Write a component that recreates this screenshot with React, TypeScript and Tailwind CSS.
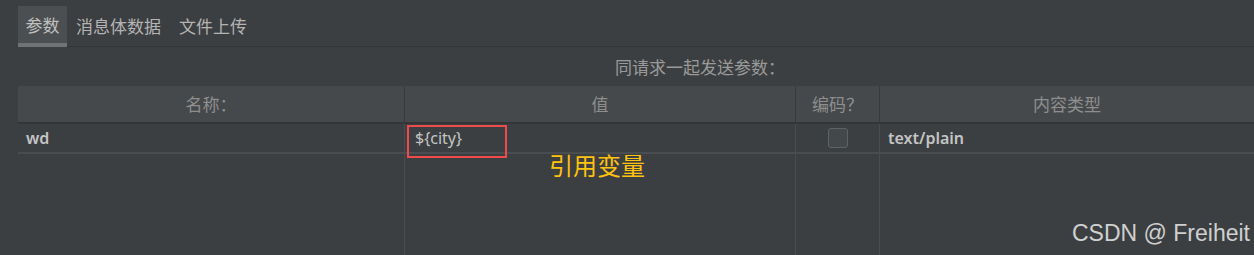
import React from "react";

const cjk = { fontFamily: '"Noto Sans CJK SC", "Noto Sans", sans-serif' };

export default function App() {
  return (
    <div className="w-[1254px] h-[255px] bg-[#3c3f41] overflow-hidden relative" style={cjk}>
      {/* Tabs */}
      <div className="pt-[6px] pl-[18px] flex h-[47px]">
        <div className="flex items-end border-b border-[#323436] w-full">
          <div className="h-[41px] w-[49px] bg-[#4b4f51] border-b-[4px] border-[#6f7375] flex items-center justify-center text-[17px] text-[#c0c0c0] -mb-px">
            参数
          </div>
          <div className="h-[41px] flex items-center pl-[9px] text-[17px] text-[#b4b4b4]">消息体数据</div>
          <div className="h-[41px] flex items-center pl-[18px] text-[17px] text-[#b4b4b4]">文件上传</div>
        </div>
      </div>
      {/* Caption */}
      <div className="h-[39px] flex items-center justify-center pl-[146px] text-[17px] text-[#9a9a9a]">
        同请求一起发送参数：
      </div>
      {/* Table */}
      <div className="ml-[18px] grid grid-cols-[387px_391px_84px_1fr]">
        <div className="h-[38px] bg-[#45494b] border-b-2 border-[#333537] border-r border-r-[#373a3c] flex items-center justify-center text-[17px] text-[#8e8e8e]">名称：</div>
        <div className="h-[38px] bg-[#45494b] border-b-2 border-[#333537] border-r border-r-[#373a3c] flex items-center justify-center text-[17px] text-[#8e8e8e]">值</div>
        <div className="h-[38px] bg-[#45494b] border-b-2 border-[#333537] border-r border-r-[#373a3c] flex items-center justify-center text-[17px] text-[#8e8e8e]">编码？</div>
        <div className="h-[38px] bg-[#45494b] border-b-2 border-[#333537] flex items-center justify-center text-[17px] text-[#8e8e8e]">内容类型</div>

        <div className="h-[30px] border-b-2 border-[#4a4d4f] border-r border-r-[#4a4d4f] flex items-center pl-[8px] text-[16px] text-[#c4c4c4] font-semibold" style={{ fontFamily: '"Noto Sans", sans-serif' }}>wd</div>
        <div className="h-[30px] border-b-2 border-[#4a4d4f] border-r border-r-[#4a4d4f] flex items-center pl-[10px] text-[16px] text-[#c4c4c4] relative" style={{ fontFamily: '"Noto Sans", sans-serif' }}>
          {"${city}"}
          <div className="absolute left-[2px] top-[1px] w-[100px] h-[33px] border-[2.5px] border-[#ef4b4b]" />
        </div>
        <div className="h-[30px] border-b-2 border-[#4a4d4f] border-r border-r-[#4a4d4f] flex items-center justify-center">
          <div className="w-[20px] h-[20px] rounded-[3px] border border-[#5f6365] bg-[#43484a]" />
        </div>
        <div className="h-[30px] border-b-2 border-[#4a4d4f] flex items-center pl-[8px] text-[16px] text-[#c4c4c4] font-semibold" style={{ fontFamily: '"Noto Sans", sans-serif' }}>text/plain</div>

        <div className="h-[101px] border-r border-r-[#4a4d4f]" />
        <div className="h-[101px] border-r border-r-[#4a4d4f] relative">
          <div className="absolute left-[144px] top-[-5px] text-[24px] leading-[32px] text-[#ffc20e]">引用变量</div>
        </div>
        <div className="h-[101px] border-r border-r-[#4a4d4f]" />
        <div className="h-[101px]" />
      </div>
      <div className="absolute right-[4px] top-[218px] text-[23px] leading-[30px] text-[#d0d0d0]" style={{ fontFamily: '"Liberation Sans", sans-serif' }}>
        CSDN @ Freiheit
      </div>
    </div>
  );
}
